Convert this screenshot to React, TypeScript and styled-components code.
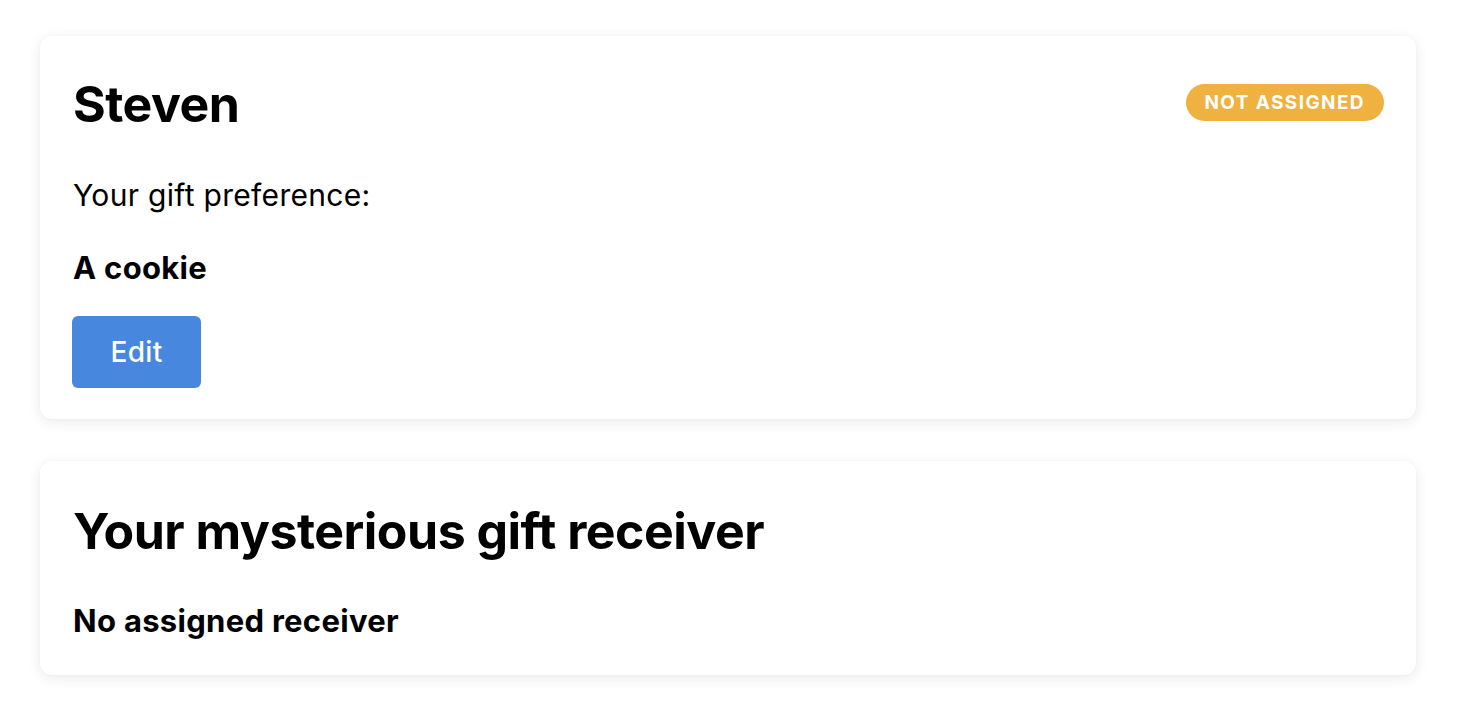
import styled, { createGlobalStyle } from 'styled-components';

const GlobalStyle = createGlobalStyle`
  html, body {
    margin: 0;
    padding: 0;
    background: #ffffff;
  }

  body {
    font-family: Inter, "Noto Sans", "Liberation Sans", sans-serif;
    color: #000;
    -webkit-font-smoothing: antialiased;
  }
`;

function App() {
  return (
    <>
      <GlobalStyle />
      <Page>
        <Card $top={38} $bottom={31}>
          <HeaderRow>
            <Title>Steven</Title>
            <Badge>Not assigned</Badge>
          </HeaderRow>
          <Label>Your gift preference:</Label>
          <Strong $gap={33}>A cookie</Strong>
          <EditButton type="button">Edit</EditButton>
        </Card>

        <Card $top={40} $bottom={34}>
          <Title>Your mysterious gift receiver</Title>
          <Strong $gap={40}>No assigned receiver</Strong>
        </Card>
      </Page>
    </>
  );
}

export default App;

const Page = styled.main`
  display: flex;
  flex-direction: column;
  gap: 42px;
  padding: 36px 44px 36px 40px;
`;

const Card = styled.section<{ $top: number; $bottom: number }>`
  display: flex;
  flex-direction: column;
  align-items: flex-start;
  background: #fff;
  border-radius: 12px;
  padding: ${(p) => p.$top}px 32px ${(p) => p.$bottom}px 33px;
  box-shadow: 0 3px 14px rgba(0, 0, 0, 0.09), 0 0 2px rgba(0, 0, 0, 0.03);
`;

const HeaderRow = styled.div`
  display: flex;
  align-items: center;
  justify-content: space-between;
  align-self: stretch;
`;

const Title = styled.h1`
  margin: 0;
  font-size: 50px;
  line-height: 60px;
  font-weight: 700;
  letter-spacing: -0.5px;
`;

const Badge = styled.span`
  display: inline-flex;
  align-items: center;
  height: 37px;
  margin-bottom: 4px;
  padding: 0 19px 0 18px;
  border-radius: 19px;
  background: #efb140;
  color: #fff;
  font-size: 19px;
  font-weight: 700;
  letter-spacing: 1.4px;
  text-transform: uppercase;
`;

const Label = styled.p`
  margin: 41px 0 0;
  font-size: 30px;
  line-height: 40px;
  font-weight: 400;
  letter-spacing: 0.3px;
`;

const Strong = styled.p<{ $gap: number }>`
  margin: ${(p) => p.$gap}px 0 0;
  font-size: 31px;
  line-height: 40px;
  font-weight: 650;
  letter-spacing: 0.3px;
`;

const EditButton = styled.button`
  margin: 28px 0 0 -1px;
  width: 129px;
  height: 72px;
  border: none;
  border-radius: 6px;
  background: #4788de;
  color: #fff;
  font-family: inherit;
  font-size: 28px;
  font-weight: 550;
  letter-spacing: 0.3px;
  cursor: pointer;
`;
